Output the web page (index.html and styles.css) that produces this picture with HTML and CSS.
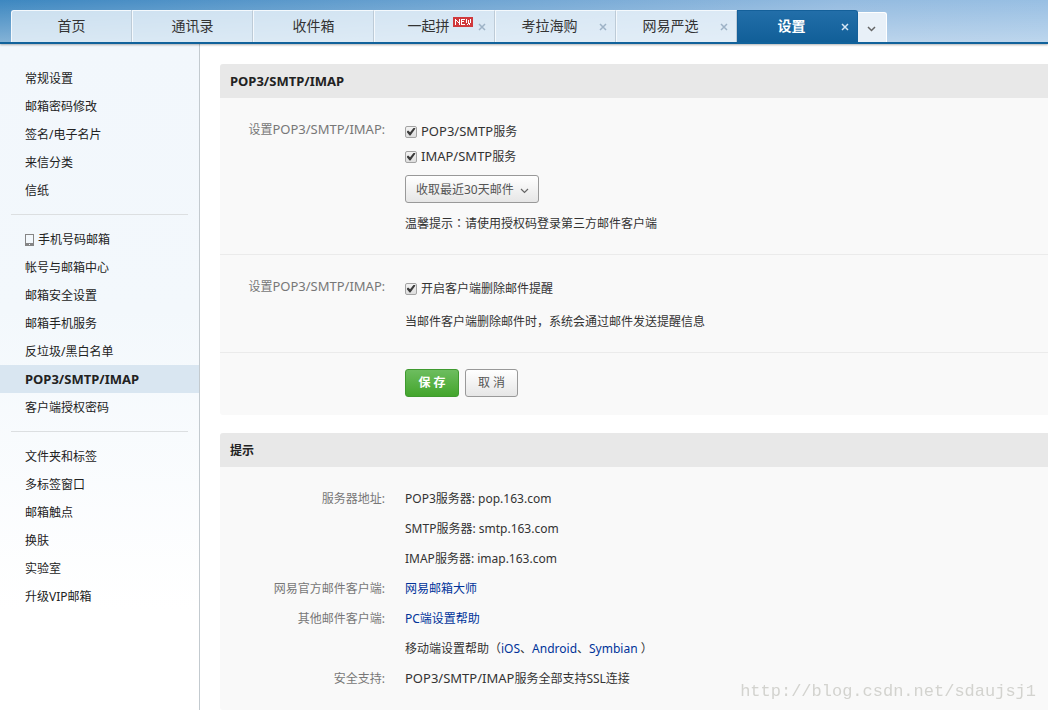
FILE: index.html
```
<!DOCTYPE html>
<html lang="zh-CN">
<head>
<meta charset="utf-8">
<title>设置</title>
<link rel="stylesheet" href="styles.css">
</head>
<body>
<header class="topbar">
  <nav class="tabs">
    <div class="tab"><a class="tab-name" href="#">首页</a></div>
    <div class="tab"><a class="tab-name" href="#">通讯录</a></div>
    <div class="tab"><a class="tab-name" href="#">收件箱</a></div>
    <div class="tab closable"><a class="tab-name" href="#">一起拼</a>
      <svg class="new" width="20" height="10" viewBox="0 0 20 10" role="img" aria-label="NEW" shape-rendering="crispEdges"><rect width="20" height="10" fill="#d0393c"/><path d="M2.500 8V2M3 3.500h1M4 4.500h1M5 5.500h1M6.500 8V2M8.500 8V2M8 2.500h4M8 4.500h3M8 7.500h4M13.500 2v4M14 6.500v1.500M15.500 3v4M16.500 6v2M17.500 2v4" fill="none" stroke="#fff"/></svg>
      <button class="close" aria-label="关闭"><svg width="8" height="8" viewBox="0 0 8 8"><path d="M1 1l6 6M7 1l-6 6"/></svg></button></div>
    <div class="tab closable"><a class="tab-name" href="#">考拉海购</a><button class="close" aria-label="关闭"><svg width="8" height="8" viewBox="0 0 8 8"><path d="M1 1l6 6M7 1l-6 6"/></svg></button></div>
    <div class="tab closable"><a class="tab-name" href="#">网易严选</a><button class="close" aria-label="关闭"><svg width="8" height="8" viewBox="0 0 8 8"><path d="M1 1l6 6M7 1l-6 6"/></svg></button></div>
    <div class="tab closable active"><a class="tab-name" href="#">设置</a><button class="close" aria-label="关闭"><svg width="8" height="8" viewBox="0 0 8 8"><path d="M1 1l6 6M7 1l-6 6"/></svg></button></div>
    <button class="more" aria-label="更多"><svg width="9" height="6" viewBox="0 0 9 6"><path d="M1 1l3.500 3.500L8 1" fill="none" stroke="#666" stroke-width="1.500"/></svg></button>
  </nav>
</header>
<div class="page">
  <aside class="side">
    <ul class="group">
      <li><a href="#">常规设置</a></li>
      <li><a href="#">邮箱密码修改</a></li>
      <li><a href="#">签名/电子名片</a></li>
      <li><a href="#">来信分类</a></li>
      <li><a href="#">信纸</a></li>
    </ul>
    <ul class="group">
      <li><a href="#"><svg class="phone" width="9" height="12" viewBox="0 0 9 12" shape-rendering="crispEdges"><path fill="#858585" fill-rule="evenodd" d="M0 0h9v12H0zM1 1v8h7V1zM4 10v1h1v-1z"/></svg>手机号码邮箱</a></li>
      <li><a href="#">帐号与邮箱中心</a></li>
      <li><a href="#">邮箱安全设置</a></li>
      <li><a href="#">邮箱手机服务</a></li>
      <li><a href="#">反垃圾/黑白名单</a></li>
      <li><a class="current" href="#">POP3/SMTP/IMAP</a></li>
      <li><a href="#">客户端授权密码</a></li>
    </ul>
    <ul class="group">
      <li><a href="#">文件夹和标签</a></li>
      <li><a href="#">多标签窗口</a></li>
      <li><a href="#">邮箱触点</a></li>
      <li><a href="#">换肤</a></li>
      <li><a href="#">实验室</a></li>
      <li><a href="#">升级VIP邮箱</a></li>
    </ul>
  </aside>
  <main class="content">
    <section class="panel">
      <h2 class="title title-latin">POP3/SMTP/IMAP</h2>
      <div class="row">
        <div class="label">设置<span class="latin">POP3/SMTP/IMAP</span>:</div>
        <div class="field">
          <label class="check"><input type="checkbox" checked><span><span class="latin">POP3/SMTP</span>服务</span></label>
          <label class="check"><input type="checkbox" checked><span><span class="latin">IMAP/SMTP</span>服务</span></label>
          <select class="range" aria-label="收取范围"><option>收取最近30天邮件</option></select>
          <p class="note">温馨提示<span class="mark" lang="zh-TW">：</span>请使用授权码登录第三方邮件客户端</p>
        </div>
      </div>
      <div class="row">
        <div class="label">设置<span class="latin">POP3/SMTP/IMAP</span>:</div>
        <div class="field">
          <label class="check"><input type="checkbox" checked>开启客户端删除邮件提醒</label>
          <p class="note">当邮件客户端删除邮件时，系统会通过邮件发送提醒信息</p>
        </div>
      </div>
      <div class="row actions">
        <div class="buttons"><button class="btn save">保 存</button><button class="btn">取 消</button></div>
      </div>
    </section>
    <section class="panel">
      <h2 class="title">提示</h2>
      <dl class="tips">
        <dt>服务器地址:</dt>
        <dd>POP3服务器: pop.163.com</dd>
        <dd>SMTP服务器: smtp.163.com</dd>
        <dd>IMAP服务器: imap.163.com</dd>
        <dt>网易官方邮件客户端:</dt>
        <dd><a href="#">网易邮箱大师</a></dd>
        <dt>其他邮件客户端:</dt>
        <dd><a href="#">PC端设置帮助</a></dd>
        <dd>移动端设置帮助（<a href="#">iOS</a>、<a href="#">Android</a>、<a href="#">Symbian</a> ）</dd>
        <dt>安全支持:</dt>
        <dd><span class="latin">POP3/SMTP/IMAP</span>服务全部支持SSL连接</dd>
      </dl>
    </section>
  </main>
</div>
<div class="watermark">http://blog.csdn.net/sdaujsj1</div>
</body>
</html>
```
FILE: styles.css
```
* { box-sizing: border-box; }
html { height: 100%; }
body {
  margin: 0;
  height: 100%;
  display: flex;
  flex-direction: column;
  overflow: hidden;
  background: #fff;
  color: #333;
  font: 12px/22px "Noto Sans", "Noto Sans CJK SC", sans-serif;
}
a { color: inherit; text-decoration: none; }
button, select, input { font: inherit; }
ul, dl, dd, p, h2 { margin: 0; padding: 0; list-style: none; }

.topbar {
  position: relative;
  flex: none;
  padding: 10px 0 0 11px;
  border-bottom: 2px solid #11629b;
  box-shadow: 0 1px 2px rgba(0, 0, 0, .3);
  background: linear-gradient(rgba(255, 255, 255, 0), rgba(255, 255, 255, .36)), linear-gradient(90deg, #3d87c0, #94bbe0 80%, #98bfe3);
}
.tabs { display: flex; height: 32px; align-items: flex-end; }
.tab {
  position: relative;
  width: 121px;
  height: 32px;
  display: flex;
  align-items: center;
  justify-content: center;
  padding-bottom: 2px;
  border: 1px solid #f4f9fd;
  border-right-color: #bdcbd7;
  border-bottom: 0;
  background: rgba(239, 246, 251, .78);
  color: #333;
  font-size: 14px;
}
.tab:first-child { border-top-left-radius: 3px; }
.active {
  border-color: #14609a;
  border-top-right-radius: 3px;
  background: linear-gradient(#226ea9, #115f98);
  color: #fff;
  font-weight: bold;
}
.closable .tab-name { padding-right: 12px; }
.new { position: absolute; left: 78px; top: 6px; }
.close {
  position: absolute;
  right: 8px;
  top: 12px;
  width: 8px;
  height: 8px;
  padding: 0;
  border: 0;
  background: none;
}
.close svg, .more svg { display: block; }
.close path { stroke: #9db2c6; stroke-width: 1.5; }
.active .close path { stroke: #d5e6f4; }
.more {
  width: 29px;
  height: 30px;
  padding: 2px 0 0 9px;
  border: 1px solid #fff;
  border-bottom: 0;
  border-left: 0;
  border-radius: 0 3px 0 0;
  background: #e8f0f8;
}

.page { flex: 1; display: flex; min-height: 0; }
.side {
  flex: none;
  width: 200px;
  padding-top: 20px;
  border-right: 1px solid #c3cacf;
  background: linear-gradient(#f2f7fc, #f3f8fc 40%, #fff 85%);
  color: #222;
}
.group + .group { margin-top: 10px; }
.group + .group::before {
  content: "";
  display: block;
  height: 1px;
  margin: 0 11px 10px;
  background: #dcdfe1;
}
.group a {
  display: flex;
  align-items: center;
  gap: 4px;
  height: 28px;
  padding: 2px 0 0 25px;
}
.group .current {
  padding-top: 0;
  background: #d9e6f1;
  font-size: 13px;
  font-weight: bold;
}

.content {
  flex: 1;
  display: flex;
  flex-direction: column;
  gap: 18px;
  padding: 20px 0 0 20px;
}
.panel { background: #f9f9f9; border-radius: 3px 0 0 3px; }
.panel:last-child { flex: 1; }
.title {
  height: 34px;
  padding-left: 10px;
  border-radius: 3px 0 0 0;
  background: #e8e8e8;
  color: #222;
  font-size: 12px;
  line-height: 36px;
}
.title-latin { font-size: 13px; line-height: 34px; }
.latin { font-size: 13px; line-height: 1; }
.mark { font-family: "Noto Sans CJK TC", sans-serif; line-height: 1; }
.row {
  display: grid;
  grid-template-columns: 165px 1fr;
  column-gap: 20px;
  padding: 21px 0 19px;
}
.row + .row { border-top: 1px solid #ebebeb; }
.label, dt { color: #777; text-align: right; }
.field { display: flex; flex-direction: column; align-items: flex-start; }
.check { display: flex; align-items: center; gap: 4px; height: 25px; }
.check input {
  appearance: none;
  width: 12px;
  height: 12px;
  margin: 0;
  border: 1px solid #a3a3a3;
  border-radius: 2px;
  background: linear-gradient(#f3f3f3, #dedede);
  display: grid;
  place-items: center;
}
.check input::before {
  content: "";
  width: 9px;
  height: 8px;
  background: #3c3c3c;
  clip-path: polygon(0 52%, 18% 38%, 40% 60%, 82% 0, 100% 14%, 44% 100%, 34% 100%);
}
.range {
  appearance: none;
  width: 134px;
  height: 28px;
  margin-top: 6px;
  padding: 2px 10px 0;
  border: 1px solid #999;
  border-radius: 3px;
  background: url("data:image/svg+xml,%3Csvg xmlns='http://www.w3.org/2000/svg' width='9' height='6'%3E%3Cpath d='M1 1l3.5 3.5L8 1' fill='none' stroke='%23666' stroke-width='1.2'/%3E%3C/svg%3E") no-repeat right 9px top 12px, linear-gradient(#fff, #e6e6e6);
  color: #555;
}
.note { margin-top: 10px; }
.row.actions { padding: 16px 0 18px; }
.buttons { grid-column: 2; display: flex; gap: 6px; }
.btn {
  height: 28px;
  padding: 0 12px;
  border: 1px solid #999;
  border-radius: 3px;
  background: linear-gradient(#fff, #e6e6e6);
  color: #555;
}
.save {
  min-width: 54px;
  border-color: #3f9a2f;
  background: linear-gradient(#6dbd5f, #43a52c);
  color: #fff;
  font-weight: bold;
}
.tips {
  display: grid;
  grid-template-columns: 165px 1fr;
  column-gap: 20px;
  padding-top: 17px;
  line-height: 30px;
}
.tips dt { grid-column: 1; }
.tips dd { grid-column: 2; }
.tips a { color: #003399; }
.watermark {
  position: fixed;
  right: 12px;
  bottom: 5px;
  color: #d3d3cf;
  font: 17px/26px "Liberation Mono", monospace;
}
```
